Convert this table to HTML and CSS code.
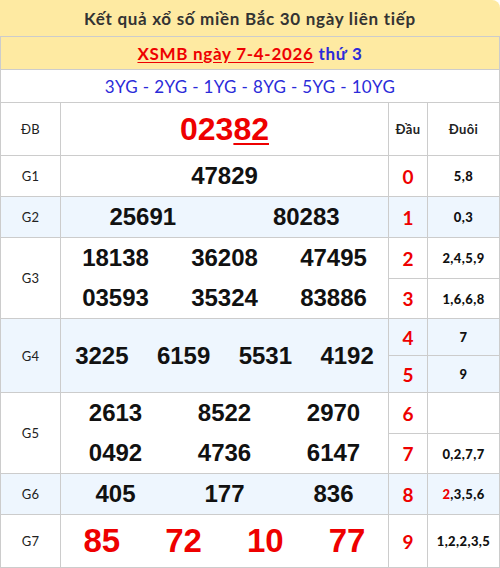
FILE: index.html
```html
<!DOCTYPE html>
<html lang="vi">
<head>
<meta charset="utf-8">
<title>XSMB</title>
<link rel="stylesheet" href="styles.css">
</head>
<body>
<div class="box">
  <div class="title">Kết quả xổ số miền Bắc 30 ngày liên tiếp</div>
  <div class="grid">
    <div class="cell full date"><a class="dlink">XSMB ngày 7-4-2026</a>&nbsp;<span class="dow">thứ 3</span></div>
    <div class="cell full codes">3YG - 2YG - 1YG - 8YG - 5YG - 10YG</div>

    <div class="cell lbl">ĐB</div>
    <div class="cell num"><span class="db">023<u>82</u></span></div>
    <div class="cell head">Đầu</div>
    <div class="cell head">Đuôi</div>

    <div class="cell lbl">G1</div>
    <div class="cell num"><span class="n">47829</span></div>
    <div class="cell dau">0</div>
    <div class="cell duoi">5,8</div>

    <div class="cell lbl alt">G2</div>
    <div class="cell num alt c2"><span class="n">25691</span><span class="n">80283</span></div>
    <div class="cell dau alt">1</div>
    <div class="cell duoi alt">0,3</div>

    <div class="cell lbl r2">G3</div>
    <div class="cell num r2 c3"><span class="n">18138</span><span class="n">36208</span><span class="n">47495</span><span class="n">03593</span><span class="n">35324</span><span class="n">83886</span></div>
    <div class="cell dau">2</div>
    <div class="cell duoi">2,4,5,9</div>
    <div class="cell dau">3</div>
    <div class="cell duoi">1,6,6,8</div>

    <div class="cell lbl alt r2">G4</div>
    <div class="cell num alt r2 c4"><span class="n">3225</span><span class="n">6159</span><span class="n">5531</span><span class="n">4192</span></div>
    <div class="cell dau alt">4</div>
    <div class="cell duoi alt">7</div>
    <div class="cell dau alt">5</div>
    <div class="cell duoi alt">9</div>

    <div class="cell lbl r2">G5</div>
    <div class="cell num r2 c3"><span class="n">2613</span><span class="n">8522</span><span class="n">2970</span><span class="n">0492</span><span class="n">4736</span><span class="n">6147</span></div>
    <div class="cell dau">6</div>
    <div class="cell duoi"></div>
    <div class="cell dau">7</div>
    <div class="cell duoi">0,2,7,7</div>

    <div class="cell lbl alt">G6</div>
    <div class="cell num alt c3"><span class="n">405</span><span class="n">177</span><span class="n">836</span></div>
    <div class="cell dau alt">8</div>
    <div class="cell duoi alt"><span class="hl">2</span>,3,5,6</div>

    <div class="cell lbl">G7</div>
    <div class="cell num c4"><span class="n big">85</span><span class="n big">72</span><span class="n big">10</span><span class="n big">77</span></div>
    <div class="cell dau">9</div>
    <div class="cell duoi">1,2,2,3,5</div>
  </div>
</div>
</body>
</html>
```

FILE: styles.css
```css
* { box-sizing: border-box; }
html, body { margin: 0; padding: 0; background: #fff; }
body { font-family: "Lato", "Noto Sans", sans-serif; color: #222; }

.box { width: 500px; }

.title {
  height: 37px;
  background: #feeaa2;
  border-bottom: 1px solid #cccccc;
  border-top-right-radius: 8px;
  display: flex;
  align-items: center;
  justify-content: center;
  font-weight: 700;
  font-size: 17px;
  letter-spacing: 0.7px;
  color: #333;
  padding-top: 1px;
}

.grid {
  display: grid;
  grid-template-columns: 60px 328px 39px 72px;
  grid-template-rows: 33px 33px 53px 41px 41px 41px 40px 37px 37px 41px 40px 41px 53px;
  border-left: 1px solid #cccccc;
}

.cell {
  border-right: 1px solid #cccccc;
  border-bottom: 1px solid #cccccc;
  display: flex;
  align-items: center;
  justify-content: center;
  background: #fff;
}

.full { grid-column: 1 / -1; }
.date { background: #feeaa2; font-size: 17px; font-weight: 700; letter-spacing: 0.7px; }
.dlink { color: #ee0000; text-decoration: underline; text-underline-offset: 2px; }
.dow { color: #2b2bd9; }
.codes { font-size: 17px; color: #2b2bd9; font-weight: 400; letter-spacing: 0.35px; }

.alt { background: #eef6fe; }
.r2 { grid-row: span 2; }

.lbl { font-size: 13px; font-weight: 400; color: #222; letter-spacing: 0.3px; }
.head { font-size: 13px; font-weight: 700; color: #222; letter-spacing: 0.4px; }

.num { font-family: "Liberation Sans", Arial, sans-serif; font-weight: 700; color: #111; }
.num .n { font-size: 24px; text-align: center; }
.num .big { font-size: 33px; color: #ee0000; }
.db { font-size: 32px; color: #ee0000; }
.db u { text-underline-offset: 3px; text-decoration-thickness: 2px; }

.c2, .c3, .c4 { display: grid; align-items: center; justify-items: center; }
.c2 { grid-template-columns: repeat(2, 1fr); }
.c3 { grid-template-columns: repeat(3, 1fr); }
.c4 { grid-template-columns: repeat(4, 1fr); }
.c3.r2 { grid-template-rows: 1fr 1fr; }

.dau { font-size: 19px; font-weight: 700; color: #ee0000; }
.duoi { font-size: 13px; font-weight: 900; color: #111; letter-spacing: 0.4px; }
.hl { color: #ee0000; }
```
